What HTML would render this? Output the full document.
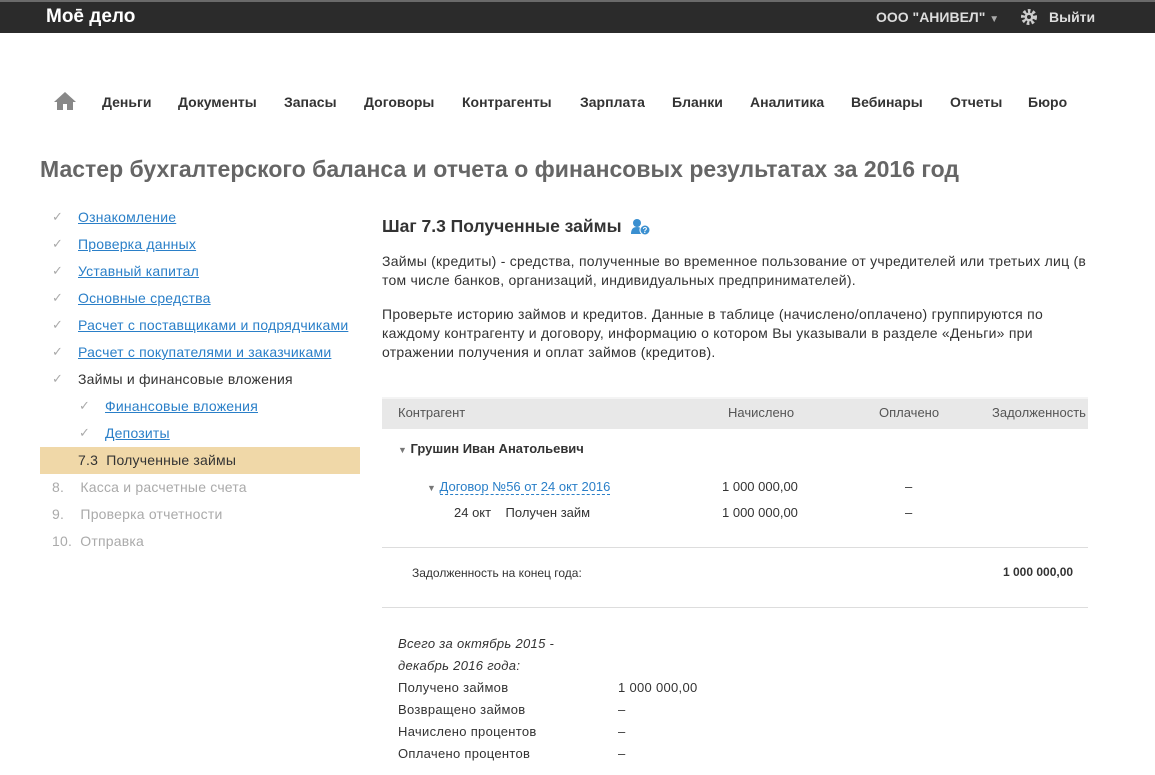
<!DOCTYPE html>
<html><head><meta charset="utf-8"><style>
body{margin:0;width:1155px;height:775px;background:#fff;font-family:"Liberation Sans",Arial,sans-serif;color:#333;position:relative;overflow:hidden}
.a{position:absolute;white-space:nowrap}
.top{position:absolute;left:0;top:0;width:1155px;height:33px;background:#2b2b2b;border-top:2px solid #6a6a6a;box-sizing:border-box}
.nav{font-size:14px;font-weight:bold;color:#333;top:94px}
.side{font-size:14px;left:78px;letter-spacing:0.2px}
.side a{color:#2a7fc8;text-decoration:underline}
.ck{position:absolute;left:52px;color:#aaa;font-size:13px}
.t{font-size:13px}
.p{font-size:14px;line-height:19px;white-space:normal;width:712px;letter-spacing:0.25px}
</style></head><body>
<div class="top"></div>
<div class="a" style="left:46px;top:6px;color:#fff;font-size:19px;font-weight:bold">Моē дело</div>
<div class="a" style="left:876px;top:9px;color:#ddd;font-size:14px;font-weight:bold">ООО "АНИВЕЛ" <span style="font-size:10px;color:#aaa">▼</span></div>
<svg class="a" style="left:1020px;top:8px" width="18" height="18" viewBox="0 0 18 18"><circle cx="9" cy="9" r="6" fill="none" stroke="#ccc" stroke-width="4" stroke-dasharray="2.5 2"/><circle cx="9" cy="9" r="4.5" fill="#ccc"/><circle cx="9" cy="9" r="2" fill="#2b2b2b"/></svg>
<div class="a" style="left:1049px;top:9px;color:#ddd;font-size:14px;font-weight:bold">Выйти</div>

<svg class="a" style="left:53px;top:91px" width="24" height="20" viewBox="0 0 24 20"><path d="M12 1 L23 11 H20 V19 H14 V13 H10 V19 H4 V11 H1 Z" fill="#888"/></svg>
<div class="a nav" style="left:102px">Деньги</div>
<div class="a nav" style="left:178px">Документы</div>
<div class="a nav" style="left:284px">Запасы</div>
<div class="a nav" style="left:364px">Договоры</div>
<div class="a nav" style="left:462px">Контрагенты</div>
<div class="a nav" style="left:580px">Зарплата</div>
<div class="a nav" style="left:672px">Бланки</div>
<div class="a nav" style="left:750px">Аналитика</div>
<div class="a nav" style="left:851px">Вебинары</div>
<div class="a nav" style="left:950px">Отчеты</div>
<div class="a nav" style="left:1028px">Бюро</div>

<div class="a" style="left:40px;top:156px;font-size:23px;font-weight:bold;color:#666">Мастер бухгалтерского баланса и отчета о финансовых результатах за 2016 год</div>

<div class="a" style="left:40px;top:447px;width:320px;height:27px;background:#f0d8a8"></div>
<span class="ck" style="top:209px">✓</span><div class="a side" style="top:209px"><a>Ознакомление</a></div>
<span class="ck" style="top:236px">✓</span><div class="a side" style="top:236px"><a>Проверка данных</a></div>
<span class="ck" style="top:263px">✓</span><div class="a side" style="top:263px"><a>Уставный капитал</a></div>
<span class="ck" style="top:290px">✓</span><div class="a side" style="top:290px"><a>Основные средства</a></div>
<span class="ck" style="top:317px">✓</span><div class="a side" style="top:317px"><a>Расчет с поставщиками и подрядчиками</a></div>
<span class="ck" style="top:344px">✓</span><div class="a side" style="top:344px"><a>Расчет с покупателями и заказчиками</a></div>
<span class="ck" style="top:371px">✓</span><div class="a side" style="top:371px;color:#333">Займы и финансовые вложения</div>
<span class="ck" style="top:398px;left:79px">✓</span><div class="a side" style="top:398px;left:105px"><a>Финансовые вложения</a></div>
<span class="ck" style="top:425px;left:79px">✓</span><div class="a side" style="top:425px;left:105px"><a>Депозиты</a></div>
<div class="a side" style="top:452px;color:#333">7.3&nbsp;&nbsp;Полученные займы</div>
<div class="a side" style="top:479px;left:52px;color:#aaa">8.&nbsp;&nbsp;&nbsp;&nbsp;Касса и расчетные счета</div>
<div class="a side" style="top:506px;left:52px;color:#aaa">9.&nbsp;&nbsp;&nbsp;&nbsp;Проверка отчетности</div>
<div class="a side" style="top:533px;left:52px;color:#aaa">10.&nbsp;&nbsp;Отправка</div>

<div class="a" style="left:382px;top:216px;font-size:17.5px;font-weight:bold;color:#333">Шаг 7.3 Полученные займы</div>
<svg class="a" style="left:631px;top:218px" width="20" height="18" viewBox="0 0 20 18"><circle cx="6" cy="5" r="4" fill="#3a8fd0"/><path d="M0 16 Q0 9 6 9 Q12 9 12 16Z" fill="#3a8fd0"/><circle cx="14" cy="12" r="5" fill="#3a8fd0" stroke="#fff" stroke-width="1"/><text x="14" y="15" font-size="8" fill="#fff" text-anchor="middle" font-family="Liberation Sans" font-weight="bold">?</text></svg>
<div class="a p" style="left:382px;top:252px">Займы (кредиты) - средства, полученные во временное пользование от учредителей или третьих лиц (в том числе банков, организаций, индивидуальных предпринимателей).</div>
<div class="a p" style="left:382px;top:305px">Проверьте историю займов и кредитов. Данные в таблице (начислено/оплачено) группируются по каждому контрагенту и договору, информацию о котором Вы указывали в разделе «Деньги» при отражении получения и оплат займов (кредитов).</div>

<div class="a" style="left:382px;top:397px;width:706px;height:30px;background:#e8e8e8;border-top:2px solid #f4f4f4"></div>
<div class="a t" style="left:398px;top:405px;color:#555">Контрагент</div>
<div class="a t" style="left:728px;top:405px;color:#555">Начислено</div>
<div class="a t" style="left:879px;top:405px;color:#555">Оплачено</div>
<div class="a t" style="left:992px;top:405px;color:#555">Задолженность</div>
<div class="a" style="left:398px;top:441px;font-size:13px;font-weight:bold"><span style="font-size:9px;color:#777">▼</span> Грушин Иван Анатольевич</div>
<div class="a t" style="left:427px;top:479px"><span style="font-size:9px;color:#777">▼</span> <span style="color:#2a7fc8;border-bottom:1px dashed #2a7fc8">Договор №56 от 24 окт 2016</span></div>
<div class="a t" style="left:722px;top:479px">1 000 000,00</div>
<div class="a t" style="left:905px;top:479px">–</div>
<div class="a t" style="left:454px;top:505px">24 окт&nbsp;&nbsp;&nbsp;&nbsp;Получен займ</div>
<div class="a t" style="left:722px;top:505px">1 000 000,00</div>
<div class="a t" style="left:905px;top:505px">–</div>
<div class="a" style="left:382px;top:547px;width:706px;border-top:1px solid #ddd"></div>
<div class="a" style="left:412px;top:566px;font-size:12px">Задолженность на конец года:</div>
<div class="a" style="left:1003px;top:565px;font-size:12px;font-weight:bold">1 000 000,00</div>
<div class="a" style="left:382px;top:607px;width:706px;border-top:1px solid #ddd"></div>
<div class="a t" style="left:398px;top:633px;font-style:italic;line-height:22px;letter-spacing:0.3px">Всего за октябрь 2015 -<br>декабрь 2016 года:</div>
<div class="a t" style="left:398px;top:677px;line-height:22px;letter-spacing:0.3px">Получено займов<br>Возвращено займов<br>Начислено процентов<br>Оплачено процентов</div>
<div class="a t" style="left:618px;top:677px;line-height:22px;letter-spacing:0.3px">1 000 000,00<br>–<br>–<br>–</div>
</body></html>
